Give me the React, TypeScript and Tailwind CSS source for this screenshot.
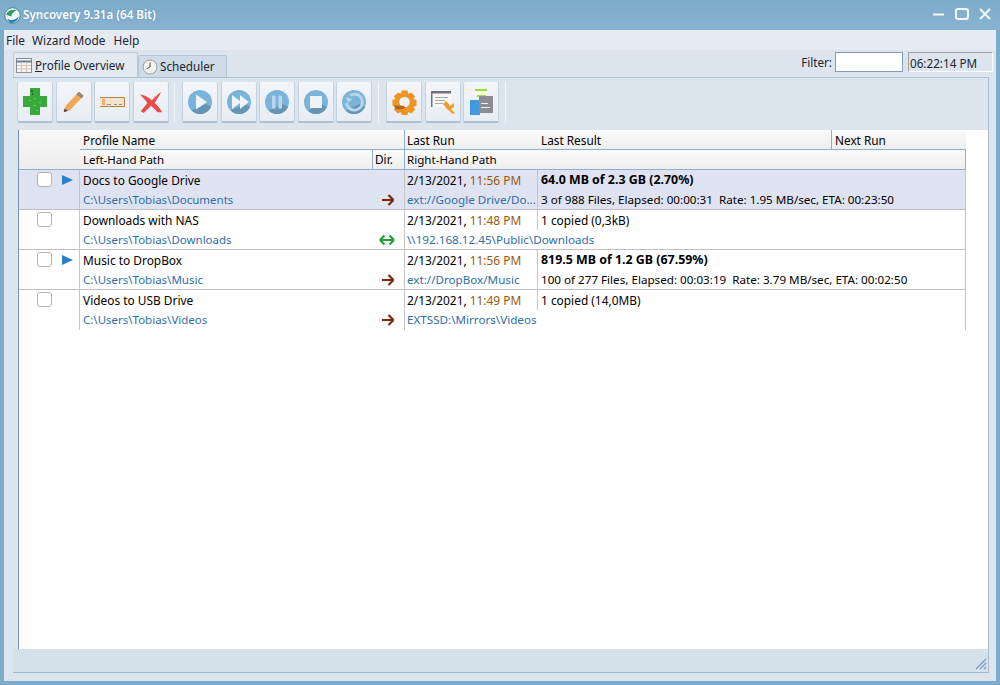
const FONT = { fontFamily: '"Noto Sans", "Open Sans", sans-serif' };

type Profile = {
  name: string;
  left: string;
  right: string;
  date: string;
  time: string;
  result: string;
  detail?: string;
  running?: boolean;
  selected?: boolean;
  both?: boolean;
};

const PROFILES: Profile[] = [
  {
    name: "Docs to Google Drive",
    left: "C:\\Users\\Tobias\\Documents",
    right: "ext://Google Drive/Do...",
    date: "2/13/2021,",
    time: "11:56 PM",
    result: "64.0 MB of 2.3 GB (2.70%)",
    detail: "3 of 988 Files, Elapsed: 00:00:31  Rate: 1.95 MB/sec, ETA: 00:23:50",
    running: true,
    selected: true,
  },
  {
    name: "Downloads with NAS",
    left: "C:\\Users\\Tobias\\Downloads",
    right: "\\\\192.168.12.45\\Public\\Downloads",
    date: "2/13/2021,",
    time: "11:48 PM",
    result: "1 copied (0,3kB)",
    both: true,
  },
  {
    name: "Music to DropBox",
    left: "C:\\Users\\Tobias\\Music",
    right: "ext://DropBox/Music",
    date: "2/13/2021,",
    time: "11:56 PM",
    result: "819.5 MB of 1.2 GB (67.59%)",
    detail: "100 of 277 Files, Elapsed: 00:03:19  Rate: 3.79 MB/sec, ETA: 00:02:50",
    running: true,
  },
  {
    name: "Videos to USB Drive",
    left: "C:\\Users\\Tobias\\Videos",
    right: "EXTSSD:\\Mirrors\\Videos",
    date: "2/13/2021,",
    time: "11:49 PM",
    result: "1 copied (14,0MB)",
  },
];

function RoundIcon({ children }: { children: React.ReactNode }) {
  return (
    <svg width="26" height="26" viewBox="0 0 26 26">
      <circle cx="13" cy="13" r="12" fill="#7ab4da" />
      <path d="M4.500 21.500 L19 15 L24 18 A12 12 0 0 1 4.500 21.500 Z" fill="#6495b5" />
      {children}
    </svg>
  );
}

function ToolButton({ children }: { children: React.ReactNode }) {
  return (
    <button className="flex h-[41px] w-[36px] items-center justify-center rounded-[2px] border-x border-b-2 border-x-[#c3d1de] border-b-[#aebfd0] bg-gradient-to-b from-[#f3f5f9] to-[#e7edf4]">
      {children}
    </button>
  );
}

function Separator() {
  return <div className="mx-[5.5px] h-[41px] w-px bg-[#f2f5f9]" />;
}

function Toolbar() {
  return (
    <div className="flex h-[53px] items-start border-t border-[#a9bfd2] pl-[4px] pt-[4px]">
      <div className="flex gap-[2.5px]">
        <ToolButton>
          <svg width="24" height="27" viewBox="0 0 24 27">
            <path d="M7 0h10v8h7v11h-7v8H7v-8H0V8h7z" fill="#39a93c" />
            <path d="M8 2h2v2H8zM9 5h1v2H9z" fill="#1f6d2a" />
            <path d="M11 10h2v1h-2zM6 12h2v1H6zM16 14h2v1h-2zM10 17h3v1h-3zM13 22h2v1h-2z" fill="#6cc76c" />
          </svg>
        </ToolButton>
        <ToolButton>
          <svg width="23" height="23" viewBox="0 0 26 26">
            <path d="M19 2 L24.500 6.500 L9 23 L2 25 L4 18 Z" fill="#eeaa55" />
            <path d="M19 2 L24.500 6.500 L22 9.500 L16.500 5 Z" fill="#8f8a84" />
            <path d="M2 25 L3 21 L6.600 23.800 Z" fill="#44403c" />
          </svg>
        </ToolButton>
        <ToolButton>
          <svg width="25" height="10" viewBox="0 0 25 10">
            <rect x="0" y="0" width="25" height="10" fill="#f3e4cf" />
            <path d="M0 0h25v1H0zM24 0h1v10h-1zM0 9h25v1H0z" fill="#b5804a" />
            <rect x="2" y="2" width="3" height="6" fill="#eeb066" />
            <path d="M7 7h4v1H7zM14 7h3v1h-3zM19 7h3v1h-3z" fill="#a58d6e" />
          </svg>
        </ToolButton>
        <ToolButton>
          <svg width="26" height="24" viewBox="0 0 26 26">
            <path d="M1 5 C8 6 11 9 14 11 C17 8 20 5 24 2 C21 8 19 11 17 14 C20 17 23 20 25 24 L20 24 C18 21 15 19 13 17 C10 20 8 22 5 25 L2 23 C5 19 7 17 9 14 C7 11 4 8 1 5 Z" fill="#e84c4c" />
          </svg>
        </ToolButton>
      </div>
      <Separator />
      <div className="ml-[1.5px] flex gap-[2.5px]">
        <ToolButton>
          <RoundIcon>
            <path d="M9 5.500 L20 13 L9 20.500 Z" fill="#eef3f8" />
          </RoundIcon>
        </ToolButton>
        <ToolButton>
          <RoundIcon>
            <path d="M6 6 L14 12 V6 L23 13 L14 20 V14 L6 20 Z" fill="#eef3f8" />
          </RoundIcon>
        </ToolButton>
        <ToolButton>
          <RoundIcon>
            <path d="M8 6.500h3.500v13H8zM14.500 6.500H18v13h-3.500z" fill="#b9d6ea" />
          </RoundIcon>
        </ToolButton>
        <ToolButton>
          <RoundIcon>
            <rect x="7" y="7" width="12" height="12" fill="#eef3f8" />
          </RoundIcon>
        </ToolButton>
        <ToolButton>
          <RoundIcon>
            <path d="M9 6.500 A8 8 0 1 1 5.500 14" fill="none" stroke="#b9d6ea" strokeWidth="2.800" />
            <path d="M5 8 L11 10 L7 14 Z" fill="#b9d6ea" />
          </RoundIcon>
        </ToolButton>
      </div>
      <Separator />
      <div className="ml-[2px] flex gap-[2.5px]">
        <ToolButton>
          <svg width="25" height="26" viewBox="0 0 26 26">
            <path d="M10 1h6l1 3.500 3-1.500 4 4-1.500 3 3 1v6l-3 1 1.500 3-4 4-3-1.500-1 3.500h-6l-1-3.500-3 1.500-4-4 1.500-3-3-1v-6l3-1L2 7l4-4 3 1.500z" fill="#f09422" />
            <circle cx="13" cy="13" r="5.500" fill="#eef2f7" />
            <path d="M2 17h10l2 2-4 1.500H4z" fill="#a5672a" />
          </svg>
        </ToolButton>
        <ToolButton>
          <svg width="26" height="24" viewBox="0 0 26 24">
            <rect x="1" y="1" width="20" height="16" fill="#f6f6f6" />
            <path d="M1 1h20v2.500H1zM1 1h1.500v16H1z" fill="#77727a" />
            <path d="M5 7h13v1H5zM5 10h10v1H5zM5 13h8v1H5z" fill="#a9a9a9" />
            <path d="M13 14 L16 11 L18 13 L20 16 L24 13 L24 17 L21 19 L25 23 L23 24 L17 19 Z" fill="#f09a2a" />
          </svg>
        </ToolButton>
        <ToolButton>
          <svg width="25" height="28" viewBox="0 0 25 28">
            <rect x="1" y="12" width="10" height="15" fill="#3f9ae0" />
            <rect x="6" y="1" width="13" height="9" fill="#f4f7ea" />
            <path d="M6 1h12v2H6zM8 7h9v2H8z" fill="#98e02c" />
            <rect x="10" y="8" width="14" height="17" fill="#8c8c92" />
            <path d="M12 15h7v1h-7zM12 19h9v1h-9z" fill="#eceef0" />
          </svg>
        </ToolButton>
      </div>
      <Separator />
    </div>
  );
}

function Arrow({ both }: { both?: boolean }) {
  if (both) {
    return (
      <svg width="16" height="12" viewBox="0 0 16 12">
        <path d="M1 6 L5.500 1.500 M1 6 L5.500 10.500 M1 6 H15 M15 6 L10.500 1.500 M15 6 L10.500 10.500" fill="none" stroke="#27a02f" strokeWidth="2.200" />
      </svg>
    );
  }
  return (
    <svg width="14" height="12" viewBox="0 0 14 12">
      <path d="M1 6 H12.500 M12.500 6 L7.500 1 M12.500 6 L7.500 11" fill="none" stroke="#7c2a0e" strokeWidth="2.200" />
    </svg>
  );
}

function ProfileRow({ p }: { p: Profile }) {
  const spans = !p.detail;
  return (
    <div className={`flex h-[40px] w-[947px] border-b border-[#bfbfbf] last:border-b-0 ${p.selected ? "bg-[#dfe3f1]" : "bg-white"}`}>
      <div className="flex w-[61px] items-start border-r border-[#c4c4c4] pl-[18px] pt-[2px]">
        <div className="h-[15px] w-[15px] rounded-[3px] border border-[#b4b4b4] bg-white" />
        {p.running && (
          <svg className="ml-[9px] mt-[3px]" width="12" height="10" viewBox="0 0 12 10">
            <path d="M1 0 L12 5 L1 10 Z" fill="#2a7fcc" />
          </svg>
        )}
      </div>
      <div className="w-[325px] border-r border-[#c4c4c4] pl-[3px]">
        <div className="h-[20px] text-[11.9px] leading-[20px] text-black">{p.name}</div>
        <div className="flex h-[20px] items-center justify-between pr-[9px] text-[11.5px] text-[#2d6ea8]">
          <span>{p.left}</span>
          <Arrow both={p.both} />
        </div>
      </div>
      <div className="w-[561px] border-r border-[#c4c4c4]">
        <div className="flex h-[20px] text-[11.9px] leading-[20px]">
          <div className="w-[133px] whitespace-nowrap border-r border-[#c4c4c4] pl-[2px] text-black">
            {p.date} <span className="text-[#96590f]">{p.time}</span>
          </div>
          <div className={`pl-[3px] text-black ${p.detail ? "text-[12.4px] font-bold" : ""}`}>{p.result}</div>
        </div>
        <div className="flex h-[19px] text-[11.65px] leading-[20px]">
          <div className={`overflow-hidden whitespace-nowrap pl-[2px] text-[#2d6ea8] ${spans ? "" : "w-[133px] border-r border-[#c4c4c4]"}`}>{p.right}</div>
          {p.detail && <div className="whitespace-pre pl-[3px] text-black">{p.detail}</div>}
        </div>
      </div>
    </div>
  );
}

function ProfileTable() {
  return (
    <div className="ml-[5px] flex min-h-0 flex-1 flex-col border-l border-[#6f93bd] bg-white">
      <div className="flex h-[40px]">
        <div className="w-[61px] border-b border-[#8fb0cc] bg-gradient-to-b from-[#f8f8f8] to-[#ececec]" />
        <div className="w-[886px] text-[11.8px] text-black">
          <div className="flex h-[20px] border-b border-[#8fb0cc] bg-gradient-to-b from-[#fafafa] to-[#eeeeee] leading-[21px]">
            <div className="w-[325px] border-r border-[#8fb0cc] pl-[3px]">Profile Name</div>
            <div className="w-[427px] border-r border-[#8fb0cc]">
              <div className="flex">
                <div className="w-[136px] pl-[2px]">Last Run</div>
                <div>Last Result</div>
              </div>
            </div>
            <div className="pl-[3px]">Next Run</div>
          </div>
          <div className="flex h-[20px] border-b border-r border-[#8fb0cc] bg-gradient-to-b from-[#fafafa] to-[#eeeeee] leading-[19px]">
            <div className="w-[293px] border-r border-[#8fb0cc] pl-[3px] text-[11.5px]">Left-Hand Path</div>
            <div className="w-[32px] border-r border-[#8fb0cc] pl-[2px]">Dir.</div>
            <div className="pl-[2px] text-[11.6px]">Right-Hand Path</div>
          </div>
        </div>
      </div>
      {PROFILES.map((p) => (
        <ProfileRow key={p.name} p={p} />
      ))}
    </div>
  );
}

function TabBar() {
  return (
    <div className="mr-[-4px] flex h-[27px] shrink-0 items-end justify-between">
      <div className="flex items-end">
        <div className="flex h-[25px] w-[125px] items-center rounded-t-[2px] border-x border-t border-[#bccbda] bg-[#e2e9f1] pl-[2px] text-[11.7px] text-[#1c2530]">
          <svg className="mr-[3px]" width="16" height="15" viewBox="0 0 16 15">
            <rect x="0.500" y="0.500" width="15" height="14" fill="#f7f4ee" stroke="#8b8f9a" />
            <path d="M0 3.500h16" stroke="#6b7fa0" strokeWidth="2" />
            <path d="M5.500 4v10M10.500 4v10M1 7.500h14M1 11h14" stroke="#cfc8bb" />
          </svg>
          <span className="pt-[2px]">
            <span className="underline">P</span>rofile Overview
          </span>
        </div>
        <div className="flex h-[22px] w-[89px] items-center rounded-t-[2px] border-x border-t border-[#b4c5d6] bg-[#cfdbe7] pl-[3px] text-[11.7px] text-[#1c2530]">
          <svg className="mr-[2px]" width="16" height="16" viewBox="0 0 16 16">
            <circle cx="8" cy="8" r="7" fill="#f1f1f0" stroke="#9b9b98" />
            <path d="M8 3.500V8L4.500 10" fill="none" stroke="#555" />
          </svg>
          <span>Scheduler</span>
        </div>
      </div>
      <div className="flex items-center self-start pt-[2px] text-[11.7px] text-[#1c2530]">
        <span className="mr-[3px] pt-[2px]">Filter:</span>
        <input className="h-[20px] w-[68px] border border-[#7f9dbb] bg-white" />
        <div className="ml-[5px] h-[20px] w-[85px] border border-[#a3a3a3] border-b-white border-r-white pl-[1px] leading-[20px]">06:22:14 PM</div>
      </div>
    </div>
  );
}

export default function App() {
  return (
    <div className="flex h-[685px] w-[1000px] flex-col overflow-hidden bg-[#7dabcb]" style={FONT}>
      <div className="flex h-[30px] shrink-0 items-center bg-gradient-to-b from-[#7dabcb] to-[#88b3d1] pl-[4px] pr-[9px]">
        <svg width="17" height="17" viewBox="0 0 16 16">
          <circle cx="8" cy="8" r="7.300" fill="#f2f7f7" stroke="#1f7f8f" strokeWidth="0.800" />
          <path d="M2 7 C4 3 8 2 12 3 C9 4 7 6 7 9 C5 8 3 8 2 7 Z" fill="#2f9a62" />
          <path d="M3 11 C6 13 10 13 14 9 C13 13 10 15 7 15 C5 14.500 4 13 3 11 Z" fill="#2c7fb3" />
        </svg>
        <span className="ml-[2px] text-[11.6px] font-semibold text-white [text-shadow:0_0_2px_#5f8fb0]">Syncovery 9.31a (64 Bit)</span>
        <div className="ml-auto flex items-center pb-[2px] text-white">
          <svg width="12" height="14" viewBox="0 0 12 14">
            <path d="M0 7.500h11" stroke="#f4f8fb" strokeWidth="2" />
          </svg>
          <svg className="ml-[10px]" width="14" height="14" viewBox="0 0 14 14">
            <rect x="1" y="2" width="12" height="10" rx="2" fill="none" stroke="#f4f8fb" strokeWidth="2" />
          </svg>
          <svg className="ml-[10px]" width="12" height="14" viewBox="0 0 12 14">
            <path d="M1 2 L11 12 M11 2 L1 12" stroke="#f4f8fb" strokeWidth="2" />
          </svg>
        </div>
      </div>
      <div className="mx-[4px] mb-[4px] flex min-h-0 flex-1 flex-col bg-[#dce5ee]">
        <div className="flex h-[20px] shrink-0 items-center bg-[#e6ebf3] pl-[2px] pt-[2px] text-[11.9px] text-[#1c2530]">
          <span>File</span>
          <span className="ml-[7px]">Wizard Mode</span>
          <span className="ml-[8px]">Help</span>
        </div>
        <div className="ml-[9px] mr-[7px] flex min-h-0 flex-1 flex-col">
          <TabBar />
          <div className="flex min-h-0 flex-1 flex-col border-r border-[#a9bfd2]">
            <Toolbar />
            <ProfileTable />
            <div className="flex h-[24px] shrink-0 items-end justify-end border-b border-[#9db8cc] bg-[#d5e1ea] pb-[2px] pr-[1px]">
              <svg width="12" height="12" viewBox="0 0 12 12">
                <path d="M1 11 L11 1 M5 11 L11 5 M9 11 L11 9" stroke="#7c9fc0" strokeWidth="1.300" />
              </svg>
            </div>
          </div>
          <div className="h-[8px] shrink-0" />
        </div>
      </div>
    </div>
  );
}
